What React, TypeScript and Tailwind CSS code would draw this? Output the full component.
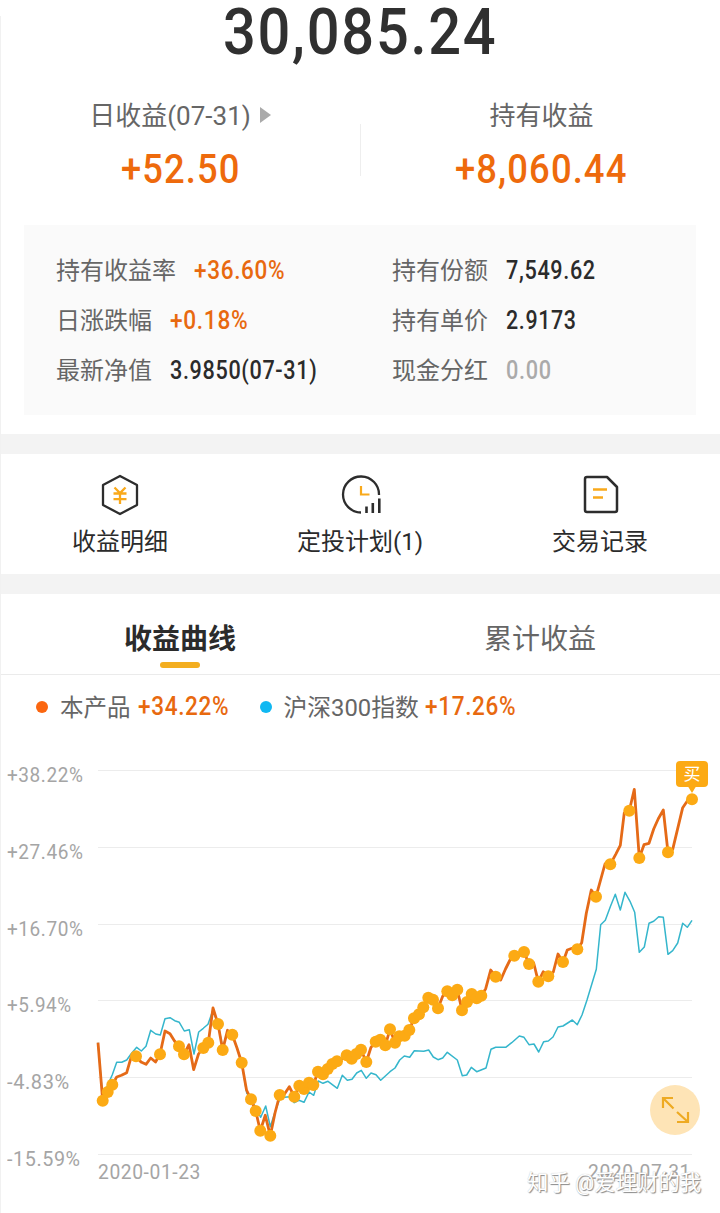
import { useLayoutEffect, useRef, useState } from "react";

type NumProps = { width: number; className?: string; children: string };

/** Condensed figures: the text is squeezed horizontally to the width it is given. */
function Num({ width, className = "", children }: NumProps) {
  const ref = useRef<HTMLSpanElement>(null);
  const [scale, setScale] = useState(1);
  useLayoutEffect(() => {
    if (ref.current) setScale(width / ref.current.offsetWidth);
  }, [width, children]);
  return (
    <span className={`inline-block whitespace-nowrap text-left ${className}`} style={{ width }}>
      <span
        ref={ref}
        className="inline-block origin-left tracking-[0.03em]"
        style={{ transform: `scaleX(${scale})` }}
      >
        {children}
      </span>
    </span>
  );
}

type Metric = { label: string; value: string; width: number; tone: string };

const LEFT: Metric[] = [
  { label: "持有收益率", value: "+36.60%", width: 91, tone: "text-[#e8690f]" },
  { label: "日涨跌幅", value: "+0.18%", width: 78, tone: "text-[#e8690f]" },
  { label: "最新净值", value: "3.9850(07-31)", width: 147, tone: "text-[#2b2b2b]" },
];
const RIGHT: Metric[] = [
  { label: "持有份额", value: "7,549.62", width: 90, tone: "text-[#2b2b2b]" },
  { label: "持有单价", value: "2.9173", width: 71, tone: "text-[#2b2b2b]" },
  { label: "现金分红", value: "0.00", width: 46, tone: "text-[#aaaaaa]" },
];

function MetricColumn({ items }: { items: Metric[] }) {
  return (
    <div className="flex w-[336px] shrink-0 flex-col">
      {items.map((m) => (
        <div key={m.label} className="flex h-[50px] items-center">
          <span className="text-[24px] text-[#666666]">{m.label}</span>
          <Num width={m.width} className={`ml-[18px] text-[25px] font-medium ${m.tone}`}>
            {m.value}
          </Num>
        </div>
      ))}
    </div>
  );
}

function YuanIcon() {
  return (
    <svg width="40" height="42" viewBox="0 0 40 42" fill="none">
      <path d="M20 2 37 11V31L20 40 3 31V11Z" stroke="#2d2d2d" strokeWidth="2.3" strokeLinejoin="round" />
      <path d="m14.500 13.500 5.500 5.500 5.500-5.500M13.500 19.500h13M13.500 25.200h13M20 19v11" stroke="#f9a91b" strokeWidth="2.3" />
    </svg>
  );
}

function PlanIcon() {
  return (
    <svg width="40" height="42" viewBox="0 0 40 42" fill="none" className="ml-[2px]">
      <path d="M38 21A18 18 0 1 0 20 38.500" stroke="#2d2d2d" strokeWidth="2.3" />
      <path d="M20 12v8.500h8.500" stroke="#f9a91b" strokeWidth="2.2" />
      <path d="M25.500 32.500V39M31.800 29V39M38.300 24.500V39" stroke="#2d2d2d" strokeWidth="2.6" />
    </svg>
  );
}

function RecordIcon() {
  return (
    <svg width="40" height="42" viewBox="0 0 40 42" fill="none" className="ml-[2px]">
      <path
        d="M6 3H26L36 13V36Q36 38 34 38H6Q4 38 4 36V5Q4 3 6 3Z"
        stroke="#2d2d2d"
        strokeWidth="2.5"
        strokeLinejoin="round"
      />
      <path d="M12 15.500H26M12 23.500H22" stroke="#f9a91b" strokeWidth="2.4" />
    </svg>
  );
}

const ACTIONS = [
  { label: "收益明细", icon: <YuanIcon /> },
  { label: "定投计划(1)", icon: <PlanIcon /> },
  { label: "交易记录", icon: <RecordIcon /> },
];

const AXIS = [
  { text: "+38.22%", width: 76 },
  { text: "+27.46%", width: 76 },
  { text: "+16.70%", width: 76 },
  { text: "+5.94%", width: 65 },
  { text: "-4.83%", width: 63 },
  { text: "-15.59%", width: 74 },
];

const GRID = [770.5, 847.5, 924.5, 1000.5, 1077.5, 1154.5];

// x, y, and 1 where a purchase is marked
const PRODUCT: number[][] = [
  [98, 1042.7], [102.7, 1100.7, 1], [107.7, 1092, 1], [112.3, 1084.7, 1], [116.7, 1077], [121.5, 1075.3],
  [126.7, 1072.7], [131, 1057.7], [136, 1056.3, 1], [141, 1062], [146, 1064.3], [150.7, 1058], [155.5, 1062],
  [160, 1054.3, 1], [165, 1031], [170, 1033.7], [174.5, 1041], [179, 1046.3, 1], [184, 1054.3, 1],
  [189, 1044.7], [193.7, 1069.7], [198.5, 1054], [203.3, 1048, 1], [208.3, 1042.7, 1], [213, 1008],
  [218, 1024, 1], [222.7, 1050, 1], [227.5, 1030.3], [232.3, 1034.7, 1], [237, 1048], [241.7, 1062.7, 1],
  [246.5, 1090], [251, 1099.3, 1], [255.7, 1111, 1], [260.3, 1130.7, 1], [265.3, 1115.3], [270.3, 1135.7, 1],
  [275, 1113], [279.7, 1095, 1], [284.5, 1094], [289.3, 1086.7], [294.3, 1096.7, 1], [299.3, 1085.7, 1],
  [304, 1089, 1], [309, 1082.7, 1], [313.3, 1085, 1], [318, 1071.7, 1], [323, 1074.3, 1], [327.7, 1069, 1],
  [332.3, 1064, 1], [337, 1061.3, 1], [342, 1059], [346.7, 1055.3, 1], [351.7, 1058.7, 1], [356.3, 1054, 1],
  [361, 1049.7, 1], [366.3, 1062, 1], [371, 1047.3], [375.7, 1041.7, 1], [380.3, 1039.7, 1],
  [385.3, 1045.3, 1], [390, 1029.3, 1], [395, 1042.7, 1], [399.3, 1036.3, 1], [404.7, 1035.7, 1],
  [409.3, 1030, 1], [414, 1018.3, 1], [419, 1014.3, 1], [423.3, 1007.3, 1], [428.3, 997.7, 1],
  [433, 999.7, 1], [438, 1008.3, 1], [442.7, 996.3], [447.3, 991.3, 1], [452.3, 995.3, 1], [457.3, 989.7, 1],
  [462, 1010.3, 1], [467, 1002, 1], [471.7, 994, 1], [476.7, 998.3, 1], [481.3, 995.7, 1], [485.7, 988.7],
  [490.7, 970], [495.7, 976.7, 1], [500.7, 980], [505.5, 969], [510, 960], [514.3, 955.7, 1], [519.3, 954],
  [524, 952, 1], [529, 964, 1], [533.7, 963], [538.3, 981.7, 1], [543.3, 971.7], [548.3, 976.3, 1],
  [553.3, 972], [558, 954], [563, 962, 1], [567.3, 950], [572, 948.3], [577.3, 949.3, 1], [581.7, 942.7],
  [586.3, 913.3], [591.3, 890], [596, 896.7, 1], [605, 864], [610.3, 864.3, 1], [615.7, 854.3],
  [620.3, 845.3], [624.3, 812.7], [629.3, 810.7, 1], [634.3, 789.3], [639.3, 858, 1], [644, 844.7],
  [649, 843.3], [653.7, 829], [658.3, 818.7], [663.3, 810], [668, 852.3, 1], [672.7, 849.3], [682.7, 807.7],
  [687.3, 801], [692, 799.3, 1],
];

const INDEX: number[][] = [
  [98, 1042.7], [102.7, 1098], [107.7, 1085], [112.3, 1074.7], [116.7, 1062.3], [121.7, 1062.3], [126.7, 1060],
  [131, 1054], [136.7, 1047.3], [141.3, 1051], [146, 1046.3], [150.7, 1030.3], [155.7, 1034], [160.3, 1035],
  [165, 1018.7], [170, 1017.7], [174.7, 1020.7], [179.3, 1022.3], [184.3, 1031], [189.3, 1029.7], [194, 1054],
  [198.7, 1032], [203.3, 1028.3], [208, 1024.3], [213, 1010], [218, 1024], [222.7, 1048], [227.5, 1031],
  [232.3, 1035], [237, 1048], [241.7, 1062.7], [246.7, 1093], [251, 1099], [255.7, 1108], [260.7, 1117.3],
  [265.7, 1106], [270.3, 1126.7], [275, 1112], [279.7, 1099], [284.7, 1097.3], [289.3, 1096.7],
  [294.3, 1102.7], [299, 1100.3], [304, 1102.3], [309, 1092], [313.7, 1095.3], [318.3, 1081], [323, 1083.3],
  [328, 1081.3], [337.3, 1088.3], [342.3, 1075.3], [347.3, 1080.3], [352, 1079.3], [356.7, 1073],
  [361.3, 1070.3], [366.3, 1078.3], [371, 1073], [376, 1074.7], [380.7, 1080.3], [390, 1071.7], [395, 1068],
  [399.7, 1060], [404.3, 1056], [409.7, 1057.3], [414.3, 1050.7], [423.7, 1051.3], [428.7, 1050],
  [433.3, 1057], [438, 1059.7], [442.7, 1058], [447.3, 1052.3], [457.3, 1060], [462.3, 1075.7], [466.7, 1075],
  [471.3, 1067.3], [476.7, 1071.7], [486, 1068], [491, 1049.3], [495.7, 1047.3], [505.7, 1047.3],
  [511.7, 1042.7], [519.3, 1036], [524, 1037.3], [529, 1044.7], [534, 1044], [538.7, 1052], [543.7, 1041.7],
  [548.3, 1041], [553, 1037], [558, 1027], [563, 1026], [567.7, 1023], [572.3, 1020], [577.3, 1024.7],
  [582, 1015], [587, 1000], [596.3, 969.3], [600.7, 924.7], [605.3, 920.3], [610.3, 906.7], [615.3, 894.3],
  [620.3, 910], [625, 892.3], [630, 901.3], [634.7, 912.3], [639.3, 952.3], [644.3, 947], [649, 923.3],
  [653.7, 921.3], [658.7, 916.7], [663.3, 917.3], [668, 954.3], [672.7, 950.7], [677.7, 943],
  [682.7, 923.3], [687.3, 927.3], [692, 920.3],
];

const toPoints = (series: number[][]) => series.map(([x, y]) => `${x},${y}`).join(" ");

function Chart() {
  return (
    <svg width="622" height="426" viewBox="98 736 622 426" fill="none" className="overflow-visible">
      {GRID.map((y) => (
        <path key={y} d={`M98 ${y}H692`} stroke="#ececec" strokeWidth="1.2" />
      ))}
      <polyline points={toPoints(INDEX)} stroke="#35b6cc" strokeWidth="1.5" strokeLinejoin="round" />
      <polyline points={toPoints(PRODUCT)} stroke="#e56a17" strokeWidth="2.8" strokeLinejoin="round" />
      {PRODUCT.filter((p) => p[2]).map(([x, y]) => (
        <circle key={x} cx={x} cy={y} r="6" fill="#fcaa14" />
      ))}
      <path d="M688 786.500h8l-4 6.500z" fill="#fcaa14" />
    </svg>
  );
}

export default function App() {
  return (
    <div className="relative flex h-[1213px] w-[720px] flex-col overflow-hidden bg-white font-['Roboto','Noto_Sans_CJK_SC',sans-serif] text-[#2b2b2b]">
      <div className="absolute left-0 top-4 h-[1197px] w-px bg-[#f1f1f1]" />

      <header className="flex h-[82px] justify-center">
        <Num width={274} className="h-[64px] text-[64.5px] font-medium leading-[64px] text-[#303030]">
          30,085.24
        </Num>
      </header>

      <section className="grid h-[143px] grid-cols-2">
        <div className="flex flex-col items-center">
          <div className="mt-[14px] flex h-10 items-center gap-2 pl-px text-[26px] text-[#666666]">
            <span>日收益(07-31)</span>
            <svg width="13" height="18" viewBox="0 0 13 18" className="mb-[3px]">
              <path d="M1 1 12 9 1 17Z" fill="#aaaaaa" />
            </svg>
          </div>
          <Num width={119} className="ml-px mt-[10px] text-[40px] font-medium leading-[48px] text-[#ee6a0c]">
            +52.50
          </Num>
        </div>
        <div className="relative flex flex-col items-center">
          <div className="absolute left-0 top-[42px] h-[52px] w-px bg-[#eeeeee]" />
          <div className="mt-[14px] flex h-10 items-center pl-[3px] text-[26px] text-[#666666]">持有收益</div>
          <Num width={172} className="ml-[2px] mt-[10px] text-[40px] font-medium leading-[48px] text-[#ee6a0c]">
            +8,060.44
          </Num>
        </div>
      </section>

      <section className="ml-6 mr-6 flex h-[190px] bg-[#fafafa] pl-8 pt-[21px]">
        <MetricColumn items={LEFT} />
        <MetricColumn items={RIGHT} />
      </section>

      <div className="mt-[19px] h-5 shrink-0 bg-[#f3f3f3]" />

      <nav className="grid h-[120px] shrink-0 grid-cols-3">
        {ACTIONS.map((a) => (
          <div key={a.label} className="flex flex-col items-center pt-5">
            {a.icon}
            <span className="mt-2 text-[24px] leading-[36px]">{a.label}</span>
          </div>
        ))}
      </nav>

      <div className="h-5 shrink-0 bg-[#f3f3f3]" />

      <div className="grid h-[81px] shrink-0 grid-cols-2 border-b border-[#ebebeb] text-[28px] leading-[42px]">
        <div className="flex flex-col items-center pt-[25px]">
          <span className="font-bold">收益曲线</span>
          <span className="mt-px h-[6px] w-10 rounded-full bg-[#f3ae20]" />
        </div>
        <div className="flex justify-center pt-[25px] text-[#666666]">累计收益</div>
      </div>

      <div className="flex h-[61px] shrink-0 items-center pl-9 pt-[3px] text-[23.5px] text-[#666666]">
        <span className="size-3 rounded-full bg-[#fb6610]" />
        <span className="ml-3 mt-1">本产品</span>
        <Num width={91} className="ml-[7px] text-[25px] font-medium text-[#e8690f]">
          +34.22%
        </Num>
        <span className="ml-[31px] size-3 rounded-full bg-[#10b8f2]" />
        <span className="ml-3 mt-1 text-[23.8px]">沪深300指数</span>
        <Num width={91} className="ml-[6px] text-[25px] font-medium text-[#e8690f]">
          +17.26%
        </Num>
      </div>

      <section className="relative flex h-[426px] shrink-0">
        <div className="flex w-[98px] shrink-0 flex-col pl-[7px] pt-[1px] text-[20px] text-[#a5a5a5]">
          {AXIS.map((a) => (
            <div key={a.text} className="flex h-[76.7px] shrink-0 items-center">
              <Num width={a.width}>{a.text}</Num>
            </div>
          ))}
        </div>
        <Chart />
        <div className="absolute left-[676px] top-[25px] flex h-[26px] w-8 items-center justify-center rounded bg-[#fcaa14] pt-[2px] text-[17px] text-white">
          买
        </div>
        <button className="absolute left-[650px] top-[349px] size-[50px] rounded-full bg-[#fee4b6]">
          <svg width="50" height="50" viewBox="0 0 50 50" fill="none" stroke="#eeaa22" strokeWidth="2.2">
            <path d="M13 23V13H23M13 13 23.500 23.500M38 27V37H27M38 37 27 27" />
          </svg>
        </button>
      </section>

      <footer className="relative flex h-[20px] shrink-0 items-center justify-between pl-[98px] pr-[29px] text-[20px] text-[#a5a5a5]">
        <Num width={103}>2020-01-23</Num>
        <Num width={103}>2020-07-31</Num>
        <div className="absolute left-[527px] top-[4px] whitespace-nowrap text-[21.4px] leading-[34px] text-white [text-shadow:1px_1px_1px_#888,0_0_1px_#bbb]">
          知乎 @爱理财的我
        </div>
      </footer>
    </div>
  );
}
